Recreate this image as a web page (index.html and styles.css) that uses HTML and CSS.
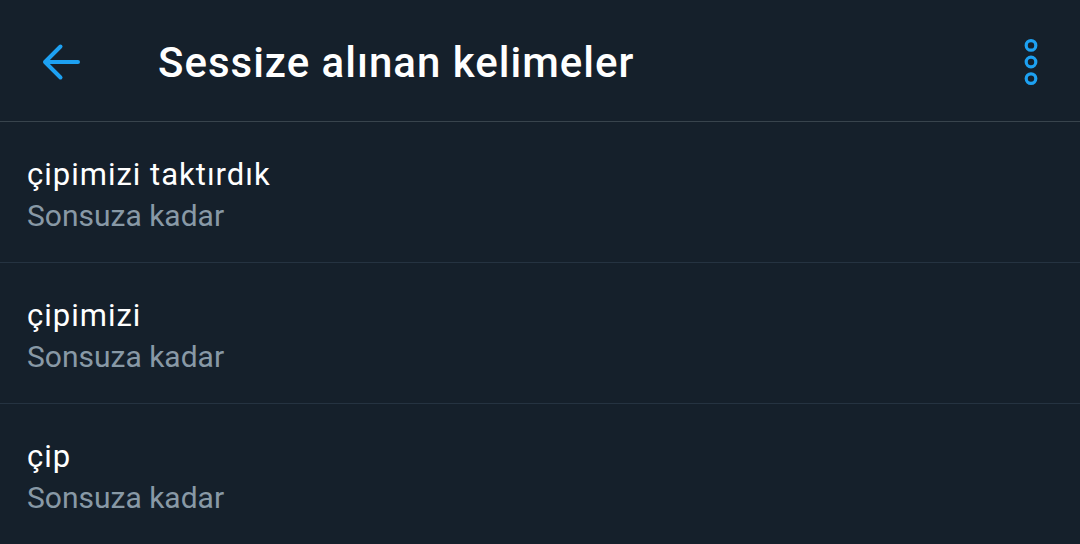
FILE: index.html
```html
<!DOCTYPE html>
<html>
<head>
<meta charset="utf-8">
<link rel="stylesheet" href="styles.css">
</head>
<body>
<div class="app">
  <header class="topbar">
    <div class="back">
      <svg width="40" height="40" viewBox="0 0 40 40"><path d="M37 20H4M19.5 4.5L4 20l15.5 15.5" fill="none" stroke="#1DA1F2" stroke-width="4" stroke-linecap="round" stroke-linejoin="round"/></svg>
    </div>
    <h1 class="title">Sessize alınan kelimeler</h1>
    <div class="more">
      <svg width="16" height="48" viewBox="0 0 16 48"><circle cx="8" cy="7.4" r="4.8" fill="none" stroke="#1DA1F2" stroke-width="3.2"/><circle cx="8" cy="24" r="4.8" fill="none" stroke="#1DA1F2" stroke-width="3.2"/><circle cx="8" cy="40.6" r="4.8" fill="none" stroke="#1DA1F2" stroke-width="3.2"/></svg>
    </div>
  </header>
  <ul class="list">
    <li class="item"><div class="word">çipimizi taktırdık</div><div class="dur">Sonsuza kadar</div></li>
    <li class="item"><div class="word">çipimizi</div><div class="dur">Sonsuza kadar</div></li>
    <li class="item"><div class="word">çip</div><div class="dur">Sonsuza kadar</div></li>
  </ul>
</div>
</body>
</html>
```
FILE: styles.css
```css
html, body { margin: 0; padding: 0; background: #15202B; }
body { font-family: Roboto, "Noto Sans", sans-serif; width: 1080px; height: 544px; overflow: hidden; }
.topbar { height: 122px; display: flex; align-items: center; border-bottom: 1px solid #38444D; box-sizing: border-box; }
.back { width: 40px; height: 40px; margin-left: 41px; margin-top: 2px; }
.back svg { display: block; }
.title { margin: 4px 0 0 77px; flex: 1; color: #FFFFFF; font-size: 42px; line-height: 50px; font-weight: 500; letter-spacing: 1px; }
.more { margin-right: 41px; margin-top: 2px; }
.more svg { display: block; }
.list { list-style: none; margin: 0; padding: 0; }
.item { height: 141px; box-sizing: border-box; border-bottom: 1px solid #253341; padding: 35px 0 0 27px; }
.word { color: #FFFFFF; font-size: 31px; line-height: 36px; letter-spacing: 1px; }
.dur { color: #8899A6; font-size: 30px; line-height: 36px; margin-top: 5px; }
```
